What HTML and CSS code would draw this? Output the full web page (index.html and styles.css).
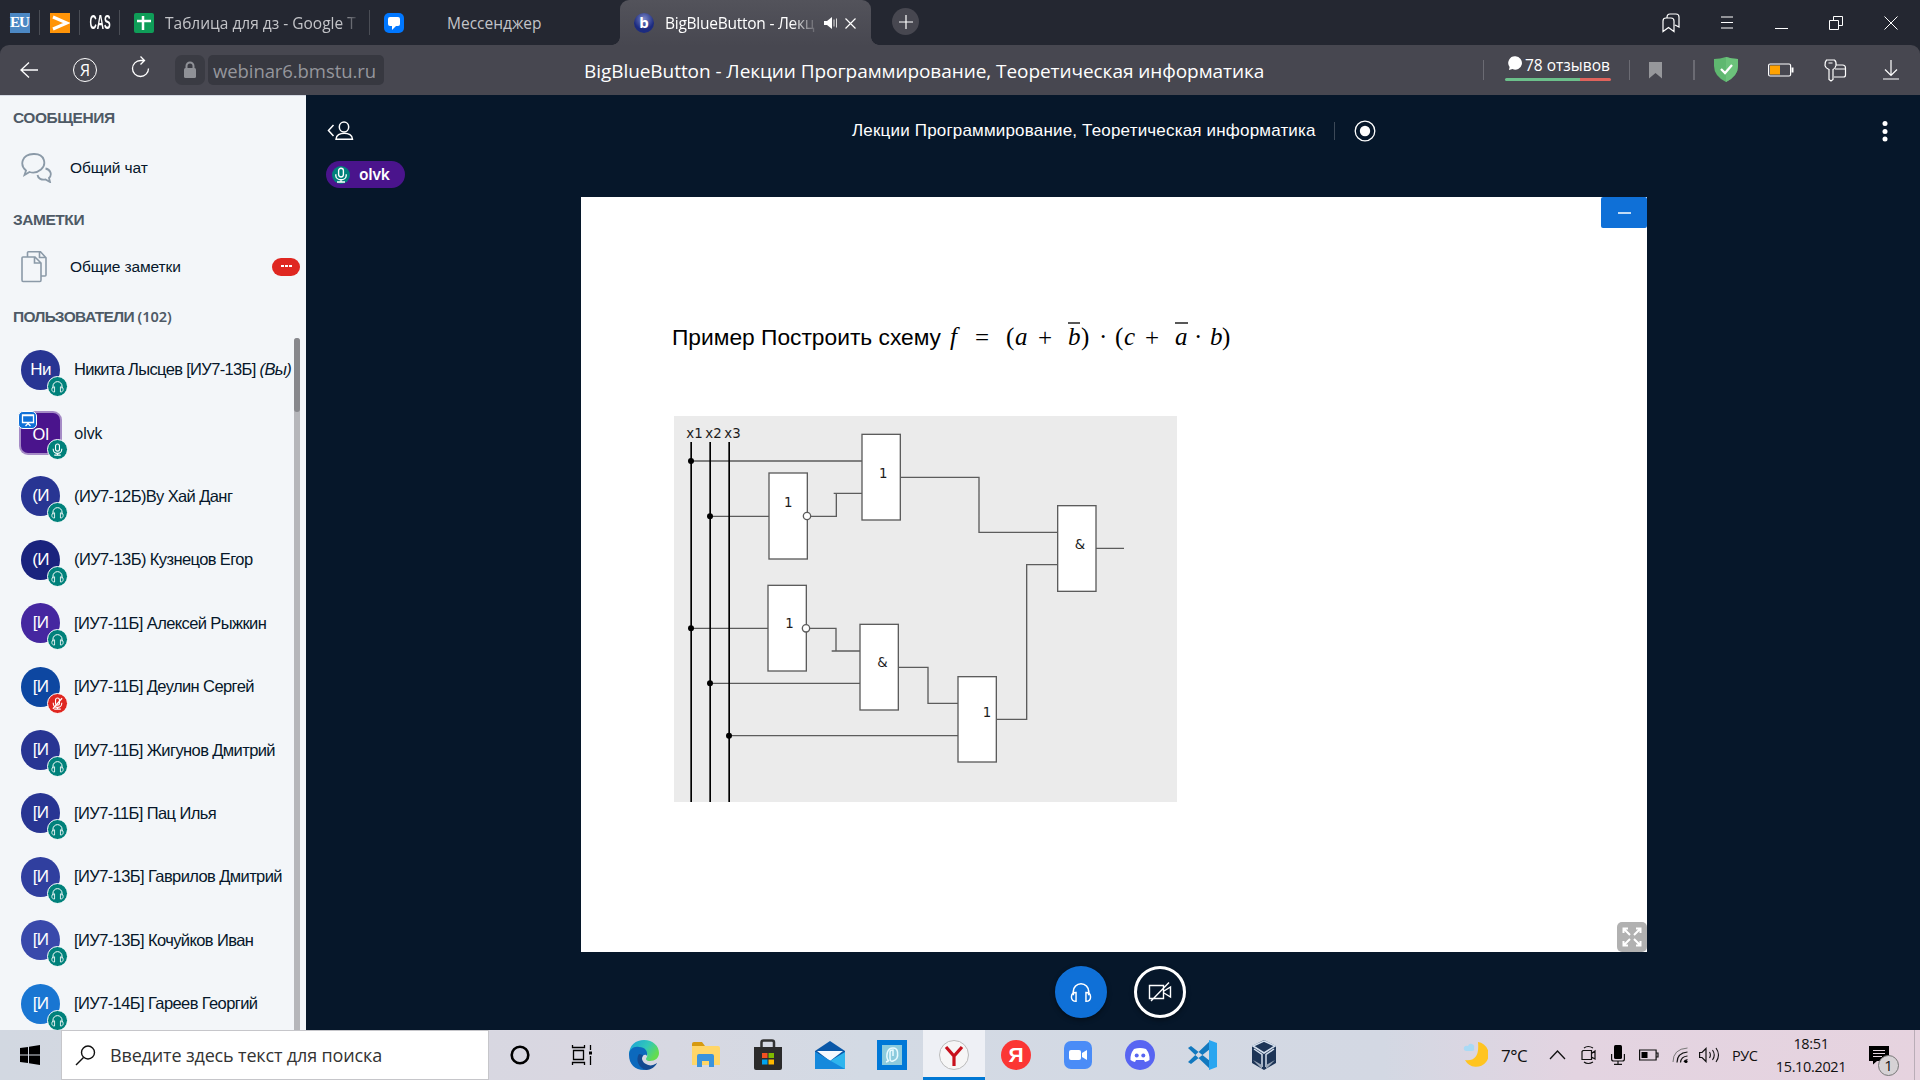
FILE: index.html
```html
<!DOCTYPE html>
<html lang="ru">
<head>
<meta charset="utf-8">
<title>BigBlueButton - Лекции Программирование, Теоретическая информатика</title>
<link rel="stylesheet" href="styles.css">
</head>
<body>
<svg class="defs" width="0" height="0">
  <defs>
    <symbol id="phones" viewBox="0 0 20 20"><path d="M3 13V9.500a7 7 0 0 1 14 0V13" fill="none" stroke="currentColor" stroke-width="1.500"/><path d="M5.500 10.500v8C2.800 18.500 1.300 17 1.300 14.500s1.500-4 4.200-4zM14.500 10.500v8c2.700 0 4.200-1.500 4.200-4s-1.500-4-4.200-4z" fill="none" stroke="currentColor" stroke-width="1.300"/></symbol>
    <symbol id="mic" viewBox="0 0 20 20"><rect x="7" y="1.500" width="6" height="11" rx="3" fill="none" stroke="currentColor" stroke-width="1.700"/><path d="M3.500 9v1.500a6.500 5.500 0 0 0 13 0V9M10 16v2.500M5 18.700h10" fill="none" stroke="currentColor" stroke-width="1.700"/></symbol>
  </defs>
</svg>

<header class="tabs">
  <div class="pin"><span class="fav eu">EU</span></div>
  <div class="pin"><span class="fav arrow"><svg width="20" height="20"><path d="M3 4l14 6L3 16" fill="none" stroke="#fff" stroke-width="3"/></svg></span></div>
  <div class="pin"><span class="fav cas">CAS</span></div>
  <div class="tab sheet"><span class="fav sheets"><svg width="20" height="20"><path d="M9 3v14M3 8h14" stroke="#fff" stroke-width="2.500"/></svg></span><span class="fade sheet-title">Таблица для дз - Google Т</span></div>
  <div class="tab msg"><span class="fav chat"><svg width="20" height="20"><path d="M6 4h8q2 0 2 2v5q0 2-2 2h-2l-4 4v-4H6q-2 0-2-2V6q0-2 2-2z" fill="#fff"/></svg></span><span class="msg-title">Мессенджер</span></div>
  <div class="tab active"><span class="fav bbb">b</span><span class="fade active-title">BigBlueButton - Лекц</span>
    <svg class="spk" width="14" height="12"><path d="M0 4h3l5-4v12L3 8H0z" fill="#fff"/><path d="M10 2.500v7M12.500 1.500v9" stroke="#ddd"/></svg>
    <svg class="tx" width="11" height="11"><path d="M.5.5l10 10M10.500.5l-10 10" stroke="#fff" stroke-width="1.200"/></svg></div>
  <div class="plus"><svg width="14" height="14"><path d="M7 0v14M0 7h14" stroke="#fff" stroke-width="1.200"/></svg></div>
  <div class="winbtns">
    <svg width="18" height="20" viewBox="0 0 18 20"><path d="M1 8q0-3 3-3h5q3 0 3 3v10.500l-5.500-4-5.500 4zM5 4.500Q5 1 8 1h6q3 0 3 3v10l-4-2" fill="none" stroke="#fff" stroke-width="1.200"/></svg>
    <svg width="12" height="13"><path d="M0 1h12M0 6.500h12M0 12h12" stroke="#fff" stroke-width="1.200"/></svg>
    <svg width="13" height="13"><path d="M0 12.500h13" stroke="#fff"/></svg>
    <svg width="14" height="14"><path d="M.5 4.500h9v9h-9zM4.500 4.500v-4h9v9h-4" fill="none" stroke="#fff"/></svg>
    <svg width="14" height="14"><path d="M.5.500l13 13M13.500.500l-13 13" stroke="#fff"/></svg>
  </div>
</header>

<nav class="bar">
  <svg class="back" width="18" height="16"><path d="M9 .5L1 8l8 7.500M1 8h17" fill="none" stroke="#fff" stroke-width="1.300"/></svg>
  <span class="ya">Я</span>
  <svg class="reload" width="20" height="24"><path d="M17.500 12.500a8 8 0 1 1-8-8H13M9.500.5L13.500 4.500l-4 4" fill="none" stroke="#fff" stroke-width="1.300"/></svg>
  <span class="lock"><svg width="14" height="18"><path d="M3.500 9V5a3.500 3.500 0 0 1 7 0v4" fill="none" stroke="#8f9197" stroke-width="2"/><rect x="1" y="7" width="12" height="10" rx="1.500" fill="#8f9197"/></svg></span>
  <span class="url"><span>webinar6.bmstu.ru</span></span>
  <h1 class="page-title">BigBlueButton - Лекции Программирование, Теоретическая информатика</h1>
  <div class="ext">
    <i class="vline"></i>
    <div class="reviews"><div class="rtext"><svg width="15" height="15"><path d="M7.500.3a6.700 6.700 0 1 1-3 12.800L1 14l.6-3A6.700 6.700 0 0 1 7.500.3z" fill="#fff"/></svg><span>78 отзывов</span></div><div class="rbar"></div></div>
    <i class="vline v2"></i>
    <svg class="bm" width="13" height="17"><path d="M0 0h13v16.500L6.500 11 0 16.500z" fill="#96979b"/></svg>
    <i class="vline v3"></i>
    <svg class="shield" width="24" height="26"><path d="M0 2Q6 2 12 0q6 2 12 2v7q0 10-12 16Q0 19 0 9z" fill="#5fb870"/><path d="M12 0q6 2 12 2v7q0 10-12 16z" fill="#6cc27b"/><path d="M7 12l4 4 7-8" fill="none" stroke="#fff" stroke-width="2.300"/></svg>
    <svg class="batt" width="26" height="14"><rect x=".6" y="1" width="22" height="12" rx="1.500" fill="none" stroke="#fff" stroke-width="1.200"/><path d="M23.500 4.500h2v5h-2z" fill="#fff"/><path d="M2 2.500h10v9H2z" fill="#ffa200"/></svg>
    <svg class="key" width="23" height="23"><path d="M2.500 1h8q2 1.500 1.500 5.500-.5 2.500-3 4v10L7 22l-2-1.500v-10Q1.500 9 1 6.500 1 2.500 2.500 1zM4.500 4h4M12.500 6h6q3 0 3 3v7q0 2-2 2H10M11 10h10" fill="none" stroke="#fff" stroke-width="1.200"/></svg>
    <svg class="down" width="16" height="20"><path d="M8 0v15M2 9.500L8 15.500l6-6M0 19h16" fill="none" stroke="#fff" stroke-width="1.200"/></svg>
  </div>
</nav>

<main class="app">
  <aside class="side">
    <h2 class="h-msg">СООБЩЕНИЯ</h2>
    <div class="item"><svg width="31" height="30" viewBox="0 0 31 30"><path d="M5 17.500C-1.500 12 .5 1.500 12.500 1S25.500 12 20 16.500c-3.500 3-8 3.500-11.500 2.500L3.500 22z" fill="none" stroke="#8b9aa8" stroke-width="1.800"/><path d="M24.500 15.500c5 1 7 6 3.500 9.500l1 4-4.500-2.500c-4 .8-7.500-1-8-4.500" fill="none" stroke="#8b9aa8" stroke-width="1.800"/></svg><span class="t-chat">Общий чат</span></div>
    <h2 class="h-note">ЗАМЕТКИ</h2>
    <div class="item"><svg width="31" height="32" viewBox="0 0 31 32"><path d="M1 7q0-1 1-1h12l6 6v17q0 1.500-1 1.500H2q-1 0-1-1.500zM13.500 6v6H20M6.500 5.500V1.500q0-.7 1-.7h12l5.500 6V24q0 1-1 1h-3.500M18.500 1v5.500H25" fill="none" stroke="#8b9aa8" stroke-width="1.600"/></svg><span class="t-note">Общие заметки</span><b class="dots"><i></i><i></i><i></i></b></div>
    <h2 class="h-user">ПОЛЬЗОВАТЕЛИ <span>(102)</span></h2>
    <div class="list">
      <ul class="users">
        <li><span class="av c1">Ни<b class="st"><svg><use href="#phones"/></svg></b></span><span class="me">Никита Лысцев [ИУ7-13Б] <em>(Вы)</em></span></li>
        <li><span class="av pres">Ol<b class="scr"><svg viewBox="0 0 14 14"><path d="M1.500 2h11v7.500h-11zM1.500 2.500h11M7 9.500v2M4.500 13L7 10.500 9.500 13" fill="none" stroke="#fff" stroke-width="1.300"/></svg></b><b class="st"><svg><use href="#mic"/></svg></b></span><span class="latin">olvk</span></li>
        <li><span class="av c1">(И<b class="st"><svg><use href="#phones"/></svg></b></span><span>(ИУ7-12Б)Ву Хай Данг</span></li>
        <li><span class="av c2">(И<b class="st"><svg><use href="#phones"/></svg></b></span><span>(ИУ7-13Б) Кузнецов Егор</span></li>
        <li><span class="av c3">[И<b class="st"><svg><use href="#phones"/></svg></b></span><span>[ИУ7-11Б] Алексей Рыжкин</span></li>
        <li><span class="av c4">[И<b class="st muted"><svg viewBox="0 0 20 20"><use href="#mic"/><path d="M3 18L17 2" stroke="#fff" stroke-width="2"/></svg></b></span><span>[ИУ7-11Б] Деулин Сергей</span></li>
        <li><span class="av c1">[И<b class="st"><svg><use href="#phones"/></svg></b></span><span>[ИУ7-11Б] Жигунов Дмитрий</span></li>
        <li><span class="av c1">[И<b class="st"><svg><use href="#phones"/></svg></b></span><span>[ИУ7-11Б] Пац Илья</span></li>
        <li><span class="av c5">[И<b class="st"><svg><use href="#phones"/></svg></b></span><span>[ИУ7-13Б] Гаврилов Дмитрий</span></li>
        <li><span class="av c6">[И<b class="st"><svg><use href="#phones"/></svg></b></span><span>[ИУ7-13Б] Кочуйков Иван</span></li>
        <li><span class="av c7">[И<b class="st"><svg><use href="#phones"/></svg></b></span><span>[ИУ7-14Б] Гареев Георгий</span></li>
      </ul>
      <div class="track"><div class="thumb"></div></div>
    </div>
  </aside>

  <section class="stage">
    <div class="top">
      <svg class="toggle" width="27" height="20"><path d="M6.500 4L1.500 9.500l5 5.500" fill="none" stroke="#fff" stroke-width="1.500"/><ellipse cx="17" cy="6" rx="4.700" ry="5" fill="none" stroke="#fff" stroke-width="1.500"/><path d="M9 18.200c0-8 16.500-8 16.500 0z" fill="none" stroke="#fff" stroke-width="1.500"/></svg>
      <div class="room"><span>Лекции Программирование, Теоретическая информатика</span><i></i><svg width="22" height="22"><circle cx="11" cy="11" r="9.800" fill="none" stroke="#fff" stroke-width="1.300"/><circle cx="11" cy="11" r="5.200" fill="#fff"/></svg></div>
      <svg class="more" width="6" height="22"><circle cx="3" cy="3.500" r="2.500" fill="#fff"/><circle cx="3" cy="11.500" r="2.500" fill="#fff"/><circle cx="3" cy="19" r="2.500" fill="#fff"/></svg>
    </div>
    <div class="talk"><b><svg width="16" height="16"><use href="#mic"/></svg></b><span>olvk</span></div>
    <div class="slide">
      <svg class="formula" width="570" height="50" viewBox="670 310 570 50">
        <text x="672" y="345" class="fs" textLength="269" lengthAdjust="spacingAndGlyphs">Пример Построить схему</text>
        <g class="fm">
          <text x="950" y="345" class="it">f</text><text x="975" y="346">=</text><text x="1006" y="345">(</text><text x="1015" y="345" class="it">a</text><text x="1038" y="346">+</text><text x="1068" y="345" class="it">b</text><text x="1081" y="345">)</text><text x="1099" y="345">·</text><text x="1115" y="345">(</text><text x="1124" y="345" class="it">c</text><text x="1145" y="346">+</text><text x="1175" y="345" class="it">a</text><text x="1194" y="345">·</text><text x="1210" y="345" class="it">b</text><text x="1222" y="345">)</text>
        </g>
        <path d="M1068 323h12M1175 323h13" stroke="#222" stroke-width="1.500"/>
      </svg>
      <svg class="scheme" width="503" height="386" viewBox="27 18 1509 1158">
        <rect x="27" y="18" width="1509" height="1158" fill="#ebebeb"/>
        <g fill="none" stroke="#5c5c5c" stroke-width="4">
          <path d="M78 153H591M135 319H312M436 319H514V250H591M506 250H514M706 202H942V367H1178M1293 415H1377M78 655H309M433 655H513V723H585M500 723H513M135 820H585M700 772H789V880H879M192 977H879M994 928H1085V464H1178"/>
        </g>
        <g fill="#fff" stroke="#5c5c5c" stroke-width="4">
          <rect x="591" y="73" width="115" height="257"/><rect x="312" y="189" width="115" height="258"/><rect x="1178" y="287" width="115" height="257"/><rect x="309" y="526" width="115" height="257"/><rect x="585" y="643" width="115" height="257"/><rect x="879" y="800" width="115" height="256"/>
          <circle cx="426" cy="318" r="11"/><circle cx="423" cy="655" r="11"/>
        </g>
        <path d="M78.500 96V1176M135.500 96V1176M192.500 96V1176" stroke="#000" stroke-width="5"/>
        <g fill="#000"><circle cx="78" cy="153" r="9"/><circle cx="135" cy="319" r="9"/><circle cx="78" cy="655" r="9"/><circle cx="135" cy="820" r="9"/><circle cx="192" cy="977" r="9"/></g>
        <g class="lab"><text x="64" y="83">x1</text><text x="121" y="83">x2</text><text x="178" y="83">x3</text><text x="642" y="203">1</text><text x="357" y="291">1</text><text x="361" y="655">1</text><text x="1229" y="416">&amp;</text><text x="637" y="772">&amp;</text><text x="953" y="920">1</text></g>
      </svg>
      <button class="min"><svg width="13" height="2"><path d="M0 1h13" stroke="#fff" stroke-width="1.500"/></svg></button>
      <button class="full"><svg width="20" height="20"><path d="M8 8L2 2M1.500 6V1.500H6M12 8l6-6M14 1.500h4.500V6M8 12l-6 6M1.500 14v4.500H6M12 12l6 6M14 18.500h4.500V14" fill="none" stroke="#fff" stroke-width="2"/></svg></button>
    </div>
    <div class="acts">
      <button class="rb blue"><svg width="22" height="22"><use href="#phones"/></svg></button>
      <button class="rb"><svg width="24" height="22"><path d="M1.500 4.500h14v13h-14zM16 10l6.500-4v10L16 12M3 20L21 1.500" fill="none" stroke="#fff" stroke-width="1.400"/></svg></button>
    </div>
  </section>
</main>

<footer class="task">
  <div class="start"><svg width="20" height="20"><path d="M0 3l8-1v7.500H0zM9 1.800L20 0v9.500H9zM0 10.500h8V18l-8-1zM9 10.500h11V20L9 18.300z" fill="#000"/></svg></div>
  <div class="search"><svg width="21" height="21"><circle cx="13" cy="7.500" r="6.500" fill="none" stroke="#111" stroke-width="1.400"/><path d="M8.500 12.500L1 20" stroke="#111" stroke-width="1.500"/></svg><span>Введите здесь текст для поиска</span></div>
  <div class="apps">
    <div><svg width="20" height="20"><circle cx="10" cy="10" r="8.300" fill="none" stroke="#000" stroke-width="2.600"/></svg></div>
    <div><svg width="22" height="20"><path d="M2.500 5.500h10v9h-10zM1.500 0v2.500h12V0M1.500 20v-2.500h12V20M19.500 0v5M19.500 11v9" fill="none" stroke="#000" stroke-width="1.300"/><path d="M18 6.500h3v3h-3z"/></svg></div>
    <div><svg width="30" height="30" viewBox="0 0 30 30"><defs><linearGradient id="eg" x2="1" y2=".5"><stop stop-color="#1aa0dc"/><stop offset=".6" stop-color="#32c8b8"/><stop offset="1" stop-color="#64dc50"/></linearGradient></defs><path d="M0 15C0 5 7 0 15 0c9 0 15 6 15 13 0 5-4 8-9 8-4 0-5-2-3-4 2-6-6-10-12-6-3 1-5 3-6 4z" fill="url(#eg)"/><path d="M0 15c0-6 5-9 10-8 6 0 9 4 8 9-1-2-4-2-5 2-1 5 3 8 8 8 3 0 5-1 7-3-3 4-8 7-13 7C6 30 0 24 0 15z" fill="#0c69bd"/><path d="M10 14c-4 6 0 14 7 16 5 0 9-3 11-7-4 3-8 3-11 1-4-2-5-6-3-9z" fill="#134a91"/></svg></div>
    <div><svg width="30" height="26"><path d="M1 2q0-2 2-2h8l3 4H1z" fill="#d69a10"/><path d="M1 4h26q2 0 2 2v17H1z" fill="#ffd668"/><path d="M6 25V14q0-2 2-2h13q2 0 2 2v11h-5v-6h-7v6z" fill="#3a93dd"/></svg></div>
    <div><svg width="30" height="32"><path d="M8.500 9V3.500q0-2 2-2h8.500q2 0 2 2V9" fill="none" stroke="#333" stroke-width="2.500"/><path d="M1 8h28v21q0 2-2 2H3q-2 0-2-2z" fill="#2b2b2b"/><path fill="#f25022" d="M9 14h5.500v5H9z"/><path fill="#7fba00" d="M15.500 14H21v5h-5.500z"/><path fill="#00a4ef" d="M9 20.500h5.500v5H9z"/><path fill="#ffb900" d="M15.500 20.500H21v5h-5.500z"/></svg></div>
    <div><svg width="30" height="30"><path d="M0 11L15 1l15 10v18H0z" fill="#0a58a8"/><path d="M2 11h26l-13 10z" fill="#f4f9ff"/><path d="M0 12l15 9 15-9v17H0z" fill="#2fb5ee"/><path d="M0 12v17h30z" fill="#1589dc"/></svg></div>
    <div><svg width="30" height="30"><path fill="#0078d7" d="M0 0h30v30H0z"/><path d="M5 5h20v20H5z" fill="#8ccbdd"/><path d="M11 20q-2-3-.500-8Q12 8 16 8t4.500 4-.5 6-4 3-3-3 0-6 3-2v6M9 22q2-.5 3-2" fill="none" stroke="#e9fbff" stroke-width="1.500"/></svg></div>
    <div class="on"><svg width="30" height="30"><circle cx="15" cy="15" r="14.500" fill="#f6f6f6" stroke="#bbb"/><path d="M7 7l8 9 8-9M15 15v11" fill="none" stroke="#c8101c" stroke-width="3.200"/></svg></div>
    <div><span class="yred">Я</span></div>
    <div><svg width="28" height="28"><rect width="28" height="28" rx="7" fill="#4a8cf7"/><rect x="5" y="9" width="12" height="10" rx="2" fill="#fff"/><path d="M18 12l5-3v10l-5-3z" fill="#fff"/></svg></div>
    <div><svg width="30" height="30"><circle cx="15" cy="15" r="15" fill="#5865f2"/><path d="M9 9q6-2 12 0 4 5 3.500 11-2 1.500-4.500 2l-1-2h-8l-1 2q-2.500-.5-4.500-2Q5 14 9 9z" fill="#fff"/><circle cx="11.700" cy="15.500" r="2" fill="#5865f2"/><circle cx="18.300" cy="15.500" r="2" fill="#5865f2"/></svg></div>
    <div><svg width="30" height="30"><path d="M1 8l3-2 19 15v8zM1 22l3 2L23 9V1z" fill="#1279bf"/><path d="M22 0l8 3v24l-8 3z" fill="#2aa6f0"/></svg></div>
    <div><svg width="26" height="30"><path d="M13 0l12 6v17l-12 7L1 23V6z" fill="#1d3557"/><path d="M13 1l11 5-11 7L2 6zM3 9l8 5.500V27M23 9l-8 5.500V27" fill="none" stroke="#d5e0ee" stroke-width="1.500"/><path d="M2 20l9 5v4zM24 20l-9 5v4z" fill="#9aa7b8"/></svg></div>
  </div>
  <div class="tray">
    <svg class="moon" width="25" height="26"><path d="M15 0a12.500 12.500 0 1 1-13 18Q17 20 15 0z" fill="#ffc420"/><path d="M3 9q-3-1-2-4 2-2 4-1 1-3 4-2 3 1 2 4 1 3-2 3z" fill="#a9daf5"/></svg>
    <span class="deg">7°C</span>
    <svg class="chev" width="17" height="10"><path d="M1 9l7.500-8L16 9" fill="none" stroke="#111" stroke-width="1.300"/></svg>
    <svg class="cam" width="16" height="20"><path d="M2 5.500h8.500v9H1V6.500zM10.500 8.500L14 6v8l-3.500-2M3 3q4-3 9 0M3 17q4 3 9 0" fill="none" stroke="#111" stroke-width="1.200"/></svg>
    <svg class="tmic" width="14" height="20"><rect x="3" y="0" width="8" height="14" rx="1.500"/><path d="M.6 9v5q0 2 2 2h8.800q2 0 2-2V9M7 16v3M3 19.300h8" fill="none" stroke="#111" stroke-width="1.200"/></svg>
    <svg class="tbat" width="20" height="12"><path d="M.6 1h16.500v10H.6zM17.500 4h1.500v4h-1.500" fill="none" stroke="#111" stroke-width="1.200"/><path d="M2.500 3h6v6h-6z"/></svg>
    <svg class="wifi" width="17" height="17"><path d="M1 15Q1 2 15.500 1" fill="none" stroke="#777"/><path d="M5 15.500Q5 6 15.500 5M8.500 15.500Q9 9.500 15.500 9M12 15q.5-2 3.500-2.500" fill="none" stroke="#111" stroke-width="1.200"/><circle cx="14" cy="14.500" r="1.600"/></svg>
    <svg class="vol" width="21" height="16"><path d="M.6 5.500H3l4-4v13l-4-4H.6z" fill="none" stroke="#111" stroke-width="1.200"/><path d="M10.500 5q1.800 3 0 6M13.500 3q3.500 5 0 10M17 1q5 7 0 14" fill="none" stroke="#111" stroke-width="1.100"/></svg>
    <span class="lang">РУС</span>
    <div class="clock"><span class="hm">18:51</span><span class="dt">15.10.2021</span></div>
    <div class="note"><svg width="20" height="19"><path d="M0 0h20v15H8l-4 3.500V15H0z"/><path d="M4 4.500h12M4 7.500h12M4 10.500h9" stroke="#e4d4df" stroke-width="1.200"/></svg><b>1</b></div>
    <i class="edge"></i>
  </div>
</footer>
</body>
</html>
```
FILE: styles.css
```css
* { box-sizing: border-box; }
body { margin: 0; width: 1920px; height: 1080px; overflow: hidden; display: flex; flex-direction: column; background: #242731; font-family: "Open Sans", "Noto Sans", sans-serif; }
svg { display: block; flex: none; }
span { white-space: nowrap; }
button { border: 0; padding: 0; display: flex; align-items: center; justify-content: center; }
.defs { position: absolute; }

/* browser tabs */
.tabs { height: 45px; flex: none; display: flex; background: #242731; color: #c3c4c8; font-size: 15.500px; }
.pin { width: 40px; height: 45px; display: flex; align-items: center; justify-content: center; background: linear-gradient(#4a4d55, #4a4d55) right 10px / 1px 25px no-repeat; }
.pin:nth-child(1) { padding-right: 1px; }
.fav { width: 20px; height: 20px; flex: none; display: flex; align-items: center; justify-content: center; }
.eu { background: #4c88c4; color: #fff; font: bold 15px "Liberation Serif", serif; letter-spacing: -1px; }
.arrow { background: #ff9408; }
.cas { color: #fff; font: bold 20px "Liberation Sans", sans-serif; transform: scaleX(.5); }
.sheets { background: #0f9d58; border-radius: 2px; }
.chat { background: #0077ff; border-radius: 5px; }
.tab { display: flex; align-items: center; height: 46px; }
.sheet { width: 250px; padding-left: 14px; background: linear-gradient(#4a4d55, #4a4d55) right 10px / 1px 25px no-repeat; }
.fade { -webkit-mask-image: linear-gradient(90deg, #000 82%, transparent); mask-image: linear-gradient(90deg, #000 82%, transparent); }
.sheet-title { margin-left: 11px; width: 195px; -webkit-mask-image: linear-gradient(90deg, #000 90%, transparent); mask-image: linear-gradient(90deg, #000 90%, transparent); }
.msg { width: 250px; padding-left: 14px; }
.msg-title { margin-left: 43px; }
.active { position: relative; width: 251px; padding-left: 14px; background: linear-gradient(#53535b, #474750); color: #fff; border-radius: 9px 9px 0 0; }
.active::before, .active::after { content: ""; position: absolute; top: 37px; width: 8px; height: 8px; }
.active::before { left: -8px; background: radial-gradient(circle at 0 0, transparent 7.500px, #474750 8px); }
.active::after { right: -8px; background: radial-gradient(circle at 100% 0, transparent 7.500px, #474750 8px); }
.bbb { border-radius: 50%; background: radial-gradient(circle at 50% 30%, #7d89c8, #1c2b80 60%); color: #fff; font-weight: bold; font-size: 15px; line-height: 18px; padding-bottom: 2px; }
.active-title { margin-left: 11px; width: 154px; letter-spacing: -.25px; }
.spk { margin-left: 5px; }
.tx { margin-left: 7px; }
.plus { width: 27px; height: 27px; border-radius: 50%; background: #474750; margin: 8px 0 0 21px; display: flex; align-items: center; justify-content: center; }
.winbtns { margin-left: auto; width: 258px; padding-right: 22px; display: flex; align-items: center; justify-content: space-between; }

/* address bar */
.bar { height: 50px; flex: none; display: flex; align-items: center; background: #474750; border-radius: 9px 9px 0 0; color: #fff; }
.back { margin-left: 20px; }
.ya { width: 24px; height: 24px; margin-left: 35px; border: 1.300px solid #fff; border-radius: 50%; font-size: 16px; display: flex; align-items: center; justify-content: center; }
.reload { margin: -4px 0 0 34px; }
.lock { width: 30px; height: 30px; margin-left: 24px; border-radius: 7px; background: #3a3b43; display: flex; align-items: center; justify-content: center; }
.url { width: 176px; height: 30px; margin-left: 3px; padding-left: 5px; border-radius: 5px; background: #373840; color: #95969c; font-size: 18.500px; line-height: 31px; letter-spacing: -.08px; }
.page-title { margin: 1px 0 0 200px; width: 680px; font-size: 19px; font-weight: 400; white-space: nowrap; letter-spacing: -.06px; }
.ext { margin-left: auto; width: 437px; display: flex; align-items: center; }
.vline { width: 1px; height: 20px; background: #6b6b73; }
.reviews { margin-left: 21px; width: 106px; height: 30px; }
.rtext { display: flex; height: 22px; align-items: center; padding-left: 3px; font-size: 15.500px; line-height: 20px; gap: 2px; }
.rtext svg { margin-top: -5px; }
.rtext span { margin-top: -2px; }
.rbar { height: 3px; border-radius: 2px; margin-top: 1px; background: linear-gradient(90deg, #6cc08b 70.500%, #e0635c 70.500%); }
.v2 { margin-left: 18px; }
.bm { margin-left: 19px; }
.v3 { margin-left: 31px; width: 2px; }
.shield { margin-left: 19px; }
.batt { margin-left: 30px; }
.key { margin-left: 30px; }
.down { margin-left: 36px; }

/* conference */
.app { height: 935px; flex: none; display: flex; background: #06172a; }
.side { width: 306px; flex: none; background: #f3f6f9; color: #06172a; border-top: 1px solid #d4d9e3; display: flex; flex-direction: column; font-family: "Liberation Sans", Arial, sans-serif; }
.side h2 { margin: 0; padding-left: 13px; font-size: 15.500px; line-height: 20px; color: #4e5a66; white-space: nowrap; flex: none; }
.h-msg { padding-top: 12px; height: 49px; }
.side .h-msg, .side .h-note { letter-spacing: -.45px; }
.side h2 span { font-family: "Noto Sans", sans-serif; font-size: 14.500px; font-weight: 600; }
.item { height: 45px; padding-left: 21px; display: flex; align-items: center; font-size: 15.500px; letter-spacing: -.12px; }
.item span { margin-left: 18px; }
.h-note { padding-top: 20px; height: 54px; }
.side .h-user { padding-top: 17px; height: 53px; letter-spacing: -.65px; }
.side .h-user span { letter-spacing: 0; }
.dots { margin-left: auto; margin-right: 6px; width: 28px; height: 18px; border-radius: 9px; background: #df2721; display: flex; gap: 1px; justify-content: center; align-items: center; padding-bottom: 2px; }
.dots i { width: 3px; height: 2px; background: #fff; }
.list { display: flex; flex: 1; min-height: 0; margin-top: -4px; overflow: hidden; }
.users { list-style: none; margin: 0; padding: 0 0 0 21px; width: 294px; font-size: 16.500px; letter-spacing: -.6px; }
.users li { height: 63.400px; display: flex; align-items: center; gap: 14px; }
.me { letter-spacing: -.66px; }
.latin { font-family: "Noto Sans", sans-serif; font-size: 15.500px; letter-spacing: -.3px; }
.av { position: relative; width: 39px; height: 40px; border-radius: 50%; color: #fff; display: flex; align-items: center; justify-content: center; flex: none; font-size: 17px; }
.c1 { background: #283593; } .c2 { background: #1a237e; } .c3 { background: #4527a0; } .c4 { background: #0d47a1; } .c5 { background: #303f9f; } .c6 { background: #3949ab; } .c7 { background: #1976d2; }
.pres { background: #4a148c; border-radius: 7px; box-shadow: 0 0 0 2px #a58bc6; font-family: "Noto Sans", sans-serif; }
.st { position: absolute; left: 26px; top: 26px; width: 21px; height: 21px; border: 1px solid #fff; border-radius: 50%; background: #00817b; display: flex; align-items: center; justify-content: center; }
.st svg { width: 13px; height: 13px; }
.st.muted { background: #df2721; }
.scr { position: absolute; left: -3px; top: -2px; width: 19px; height: 18px; border: 1px solid #fff; border-radius: 5px; background: #0f70d7; display: flex; align-items: center; justify-content: center; }
.scr svg { width: 14px; height: 14px; }
.track { width: 6px; background: #b5b6ba; border-radius: 3px 3px 0 0; }
.thumb { height: 74px; border-radius: 3px; background: #87888c; }

.stage { flex: 1; display: flex; flex-direction: column; color: #fff; font-family: "Liberation Sans", Arial, sans-serif; }
.top { height: 66px; padding: 5px 32px 0 21px; display: flex; align-items: center; }
.room { display: flex; align-items: center; width: 525px; margin-left: 498px; font-size: 17px; }
.room span { width: 464px; letter-spacing: .18px; }
.room i { width: 1px; height: 18px; margin-left: 18px; background: #3c4958; }
.room svg { margin-left: 19px; }
.more { margin-left: auto; }
.talk { margin-left: 20px; width: 79px; height: 27px; border-radius: 14px; background: #4a148c; display: flex; align-items: center; padding-left: 6px; font: 600 15.500px "Noto Sans", sans-serif; letter-spacing: -.2px; }
.talk span { margin-top: -2px; }
.talk b { width: 18px; height: 18px; border-radius: 50%; background: #00817b; display: flex; align-items: center; justify-content: center; margin-right: 9px; }
.slide { position: relative; width: 1066px; height: 755px; margin: 9px 0 0 275px; background: #fff; padding: 113px 0 0 89px; }
.formula { overflow: visible; }
.scheme { margin: 56px 0 0 4px; }
.fs { font-size: 22.500px; }
.fm { font-family: "Liberation Serif", serif; font-size: 25px; }
.it { font-style: italic; }
.lab { font-family: "DejaVu Sans", sans-serif; font-size: 40px; fill: #1c1c1c; }
.min { position: absolute; right: 0; top: 0; width: 46px; height: 31px; background: #0f70d7; border-radius: 2px; }
.full { position: absolute; right: 0; bottom: 0; width: 30px; height: 30px; background: #b1b1b1; border-radius: 5px; }
.acts { display: flex; gap: 27px; margin: 14px 0 0 749px; }
.rb { width: 52px; height: 52px; border-radius: 50%; border: 3px solid #fff; background: transparent; color: #fff; box-shadow: 0 2px 5px rgba(0,0,0,.4); }
.blue { background: #0f70d7; border-color: #0f70d7; }

/* taskbar */
.task { height: 50px; display: flex; background: linear-gradient(90deg, #d2d8e1 0, #d9d7e1 30%, #d3dae4 45%, #d3d8e3 72%, #e3d4e1 82%, #e6d3df); color: #111; }
.start { width: 61px; padding-right: 1px; display: flex; align-items: center; justify-content: center; }
.search { width: 428px; height: 50px; border: 1px solid #c6c6ca; background: #fff; display: flex; align-items: center; padding-left: 13px; font-size: 18px; letter-spacing: -.15px; color: #333; }
.search span { margin-left: 14px; }
.apps { display: flex; }
.apps div { width: 62px; height: 50px; display: flex; align-items: center; justify-content: center; }
.apps .on { background: #eef0f5; border-bottom: 3px solid #0078d4; padding-top: 3px; }
.yred { width: 30px; height: 30px; border-radius: 50%; background: #fb3634; color: #fff; display: flex; align-items: center; justify-content: center; font: bold 21px "Liberation Sans", sans-serif; }
.tray { margin-left: auto; width: 457px; display: flex; align-items: center; }
.deg { margin-left: 13px; width: 27px; font-size: 17px; letter-spacing: -.5px; }
.chev { margin-left: 21px; }
.cam { margin-left: 15px; }
.tmic { margin-left: 14px; }
.tbat { margin-left: 14px; }
.wifi { margin-left: 13px; }
.vol { margin-left: 10px; }
.lang { margin-left: 12px; width: 27px; font-size: 14.500px; letter-spacing: -.5px; }
.clock { margin-left: 14px; width: 76px; display: flex; flex-direction: column; align-items: center; font-size: 14.500px; line-height: 23px; letter-spacing: -.35px; }
.note { position: relative; margin-left: 20px; }
.note b { position: absolute; left: 9px; top: 9px; width: 21px; height: 21px; border: 1px solid #777; border-radius: 50%; background: #d6d2d5; font-weight: 400; font-size: 15px; line-height: 19px; text-align: center; }
.edge { margin-left: auto; margin-right: 5px; width: 1px; height: 50px; background: #b9adb7; }
```
